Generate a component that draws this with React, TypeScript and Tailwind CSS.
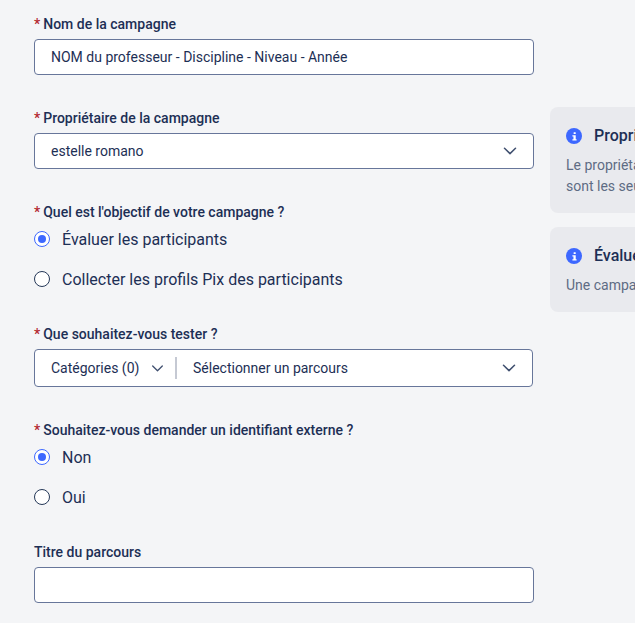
function Chevron({ className }: { className: string }) {
  return (
    <svg viewBox="0 0 14 8" className={className} fill="none" stroke="currentColor" strokeWidth="1.5" strokeLinecap="round" strokeLinejoin="round">
      <path d="M1.5 1.2 7 6.6l5.5-5.4" />
    </svg>
  );
}

function Label({ children, required = true }: { children: string; required?: boolean }) {
  return (
    <div className="mb-[5px] h-5 text-sm leading-5 font-medium text-[#1d2f55]">
      {required && <span className="mr-[3px] text-[#b3262e]">*</span>}
      {children}
    </div>
  );
}

function Radio({ label, checked = false }: { label: string; checked?: boolean }) {
  return (
    <label className="flex h-6 items-center gap-3 text-base leading-6 text-[#1d2f55]">
      <span
        className={
          checked
            ? "flex h-4 w-4 items-center justify-center rounded-full border border-[#3d68ff] bg-white"
            : "h-4 w-4 rounded-full border border-[#253858] bg-white"
        }
      >
        {checked && <span className="h-2 w-2 rounded-full bg-[#3d68ff]" />}
      </span>
      <span className="pt-0.5">{label}</span>
    </label>
  );
}

function InfoCard({ title, lines }: { title: string; lines: string[] }) {
  return (
    <div className="w-[420px] rounded-lg bg-[#e9eaee] px-4 pt-[15px] pb-4">
      <div className="flex h-7 items-center gap-3">
        <span className="flex h-4 w-4 items-center justify-center rounded-full bg-[#3d68ff]">
          <svg viewBox="0 0 8 10" className="h-[9px] w-[7px]" fill="white">
            <rect x="3" y="0" width="2.4" height="2.2" rx="0.4" />
            <path d="M1.6 3.6h3.8v4.6h1v1.4H1.6V8.2h1.2V5H1.6z" />
          </svg>
        </span>
        <span className="text-base font-medium text-[#1d2f55]">{title}</span>
      </div>
      <div className="mt-[5px] text-sm leading-[21px] whitespace-nowrap text-[#5e6c84]">
        {lines.map((line) => (
          <p key={line}>{line}</p>
        ))}
      </div>
    </div>
  );
}

const boxClass = "h-9 rounded border border-[#67769a] bg-white px-4 text-sm text-[#1d2f55]";

export default function App() {
  return (
    <div className="flex h-[623px] w-[635px] gap-4 overflow-hidden bg-[#f4f5f7] pt-[14px] pl-[34px] font-['Roboto',sans-serif]">
      <form className="flex w-[500px] shrink-0 flex-col gap-[33px]">
        <div>
          <Label>Nom de la campagne</Label>
          <div className={`${boxClass} flex items-center`}>NOM du professeur - Discipline - Niveau - Année</div>
        </div>
        <div>
          <Label>Propriétaire de la campagne</Label>
          <div className={`${boxClass} flex items-center justify-between`}>
            estelle romano
            <Chevron className="h-2 w-[14px] text-[#3f4f6f]" />
          </div>
        </div>
        <div>
          <Label>Quel est l'objectif de votre campagne ?</Label>
          <div className="flex flex-col gap-4">
            <Radio label="Évaluer les participants" checked />
            <Radio label="Collecter les profils Pix des participants" />
          </div>
        </div>
        <div>
          <Label>Que souhaitez-vous tester ?</Label>
          <div className="flex h-[38px] w-[499px] items-center rounded border border-[#67769a] bg-white text-sm text-[#1d2f55]">
            <div className="flex w-[140px] items-center justify-between pr-[11px] pl-4">
              Catégories (0)
              <Chevron className="h-[7px] w-[13px] text-[#3f4f6f]" />
            </div>
            <div className="h-[22px] w-0.5 bg-[#c5c9d3]" />
            <div className="flex flex-1 items-center justify-between pr-4 pl-4">
              Sélectionner un parcours
              <Chevron className="h-2 w-[14px] text-[#3f4f6f]" />
            </div>
          </div>
        </div>
        <div>
          <Label>Souhaitez-vous demander un identifiant externe ?</Label>
          <div className="flex flex-col gap-4">
            <Radio label="Non" checked />
            <Radio label="Oui" />
          </div>
        </div>
        <div>
          <Label required={false}>Titre du parcours</Label>
          <div className={boxClass} />
        </div>
      </form>
      <aside className="mt-[93px] flex shrink-0 flex-col gap-[14px]">
        <InfoCard
          title="Propriétaire de la campagne"
          lines={["Le propriétaire de la campagne et les administrateurs", "sont les seuls à pouvoir la modifier."]}
        />
        <InfoCard title="Évaluer les participants" lines={["Une campagne d'évaluation permet de tester les participants."]} />
      </aside>
    </div>
  );
}
